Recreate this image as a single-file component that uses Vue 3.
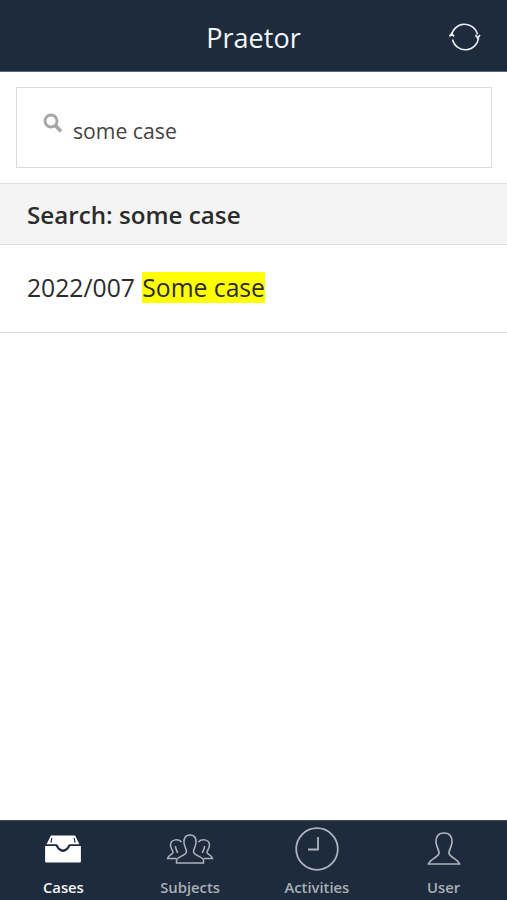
<template>
  <div class="app">
    <header class="header">
      <h1 class="title">Praetor</h1>
      <svg class="refresh" width="34" height="32" viewBox="0 0 34 32" fill="none" stroke="#e8edf0" stroke-width="1.5">
        <path d="M3.5 15 A13.2 13.2 0 0 1 29.5 13.5" />
        <path d="M30.5 17 A13.2 13.2 0 0 1 4.5 18.5" />
        <path d="M1.5 15.5 L3.7 12.5 L6 15.5" stroke-width="1.7" />
        <path d="M27.5 14 L29.7 17 L32 14" stroke-width="1.7" />
      </svg>
    </header>

    <div class="search-wrap">
      <div class="search-box">
        <svg class="search-icon" width="20" height="21" viewBox="0 0 20 21" fill="none">
          <circle cx="8" cy="8" r="6" stroke="#a6a6a6" stroke-width="2.8" />
          <path d="M12.5 12.5 L18 18.5" stroke="#a6a6a6" stroke-width="3.6" />
        </svg>
        <span class="search-text">some case</span>
      </div>
    </div>

    <div class="section-title">Search: some case</div>

    <div class="case-row">
      <span>2022/007 <mark class="hit">Some case</mark></span>
    </div>

    <div class="spacer"></div>

    <nav class="tabs">
      <div v-for="tab in tabs" :key="tab.name" class="tab" :class="{ active: tab.name === 'Cases' }">
        <div class="tab-icon">
          <svg v-if="tab.name === 'Cases'" width="38" height="29" viewBox="0 0 38 30">
            <path d="M6.5 1.5 H31.5 L36 10.5 H26 Q25 10.5 24.5 11.5 Q22.5 16 19 16 Q15.5 16 13.5 11.5 Q13 10.5 12 10.5 H2 Z" fill="#fff" />
            <path d="M7.5 4 L6.5 9 M30.5 4 L31.5 9" stroke="#1d2b3c" stroke-width="1.2" />
            <path d="M0.5 12.5 H11.5 Q14.5 18.5 19 18.5 Q23.5 18.5 26.5 12.5 H37.5 V28.5 Q37.5 29.5 36.5 29.5 H1.5 Q0.5 29.5 0.5 28.5 Z" fill="#fff" />
          </svg>
          <svg v-else-if="tab.name === 'Subjects'" width="48" height="30" viewBox="0 0 48 30" fill="none" stroke="#aeb4ba" stroke-width="1.5">
            <path d="M24 1 C19 1 17.5 5 18 9 C18.5 13 20.5 15 20.5 18 C20.5 21 11 23 10.5 26 V29 H37.5 V26 C37 23 27.5 21 27.5 18 C27.5 15 29.5 13 30 9 C30.5 5 29 1 24 1 Z" />
            <path d="M15.5 8 C13 4.5 5 5 4.5 10.5 C4.2 14.5 7 16 7 18.5 C7 20.5 2 21 1.5 24.5 H10.5" />
            <path d="M32.5 8 C35 4.5 43 5 43.5 10.5 C43.8 14.5 41 16 41 18.5 C41 20.5 46 21 46.5 24.5 H37.5" />
            <path d="M9.5 12 C9 15 11.5 16.5 11.5 19 M38.5 12 C39 15 36.5 16.5 36.5 19" />
          </svg>
          <svg v-else-if="tab.name === 'Activities'" width="44" height="44" viewBox="0 0 44 44" fill="none" stroke="#aeb4ba" stroke-width="1.8">
            <circle cx="22" cy="22" r="20.8" />
            <path d="M23 10 V22.5 H13" />
          </svg>
          <svg v-else width="34" height="34" viewBox="0 0 34 34" fill="none" stroke="#aeb4ba" stroke-width="1.7">
            <path d="M17 1 C11 1 8.5 5 9 10.5 C9.5 15 12 17.5 12 21 C12 25 3 27 1.5 32 H32.5 C31 27 22 25 22 21 C22 17.5 24.5 15 25 10.5 C25.5 5 23 1 17 1 Z" />
          </svg>
        </div>
        <span class="tab-label">{{ tab.name }}</span>
      </div>
    </nav>
  </div>
</template>

<script setup>
const tabs = [
  { name: 'Cases' },
  { name: 'Subjects' },
  { name: 'Activities' },
  { name: 'User' }
]
</script>

<style>
html, body {
  margin: 0;
  background: #fff;
}
</style>

<style scoped>
.app {
  width: 507px;
  height: 900px;
  display: flex;
  flex-direction: column;
  overflow: hidden;
  background: #fff;
  font-family: "Open Sans", "Noto Sans", sans-serif;
  color: #2b2b2b;
}

.header {
  height: 71px;
  flex: none;
  position: relative;
  display: flex;
  align-items: center;
  justify-content: center;
  background: #1d2b3c;
  border-bottom: 1px solid #5d6875;
}

.title {
  margin: 4px 0 0;
  color: #f4f7f8;
  font-size: 27px;
  font-weight: 400;
  line-height: 1;
}

.refresh {
  position: absolute;
  top: 21px;
  right: 25px;
}

.search-wrap {
  flex: none;
  padding: 15px 15px 15px 16px;
}

.search-box {
  height: 79px;
  display: flex;
  align-items: center;
  padding-left: 26px;
  border: 1px solid #dcdcdc;
}

.search-icon {
  margin: -8px 10px 0 0;
}

.search-text {
  color: #444;
  font-size: 21.2px;
  margin-top: 6px;
}

.section-title {
  height: 60px;
  flex: none;
  display: flex;
  align-items: center;
  padding-left: 27px;
  background: #f4f4f4;
  border-top: 1px solid #dedede;
  border-bottom: 1px solid #dedede;
  font-size: 24.2px;
  font-weight: 600;
}

.case-row {
  height: 87px;
  flex: none;
  display: flex;
  align-items: center;
  padding-left: 27px;
  border-bottom: 1px solid #dcdcdc;
  font-size: 24.7px;
}

.case-row span {
  margin-top: -2px;
}

.hit {
  display: inline-block;
  height: 31px;
  line-height: 31px;
  margin-left: 1px;
  background: #ffff00;
  color: inherit;
}

.spacer {
  flex: 1;
}

.tabs {
  height: 80px;
  flex: none;
  display: grid;
  grid-template-columns: repeat(4, 1fr);
  background: #1d2b3c;
  border-top: 1px solid #3e4a58;
  box-sizing: border-box;
}

.tab {
  display: flex;
  flex-direction: column;
  align-items: center;
}

.tab-icon {
  height: 55px;
  display: flex;
  align-items: center;
  justify-content: center;
}

.tab-label {
  color: #a9afb5;
  font-size: 14.8px;
  font-weight: 600;
  line-height: 22px;
}

.tab.active .tab-label {
  color: #f2f5f6;
}
</style>
